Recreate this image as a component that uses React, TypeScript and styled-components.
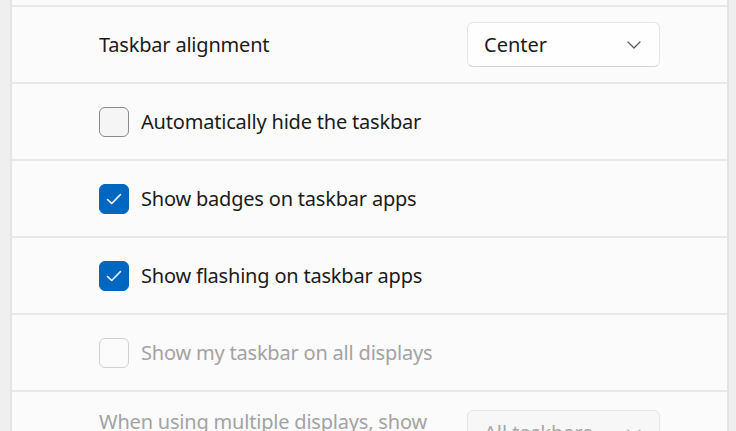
import React from 'react';
import styled, { createGlobalStyle } from 'styled-components';

const GlobalStyle = createGlobalStyle`
  html, body {
    margin: 0;
    padding: 0;
    background: #efefef;
    font-family: 'Noto Sans', 'Open Sans', sans-serif;
    -webkit-font-smoothing: antialiased;
  }
`;

const Page = styled.div`
  width: 736px;
  height: 431px;
  overflow: hidden;
  padding-left: 10px;
  box-sizing: border-box;
`;

const Card = styled.div`
  width: 719px;
  background: #fbfbfb;
  border-left: 2px solid #e4e4e4;
  border-right: 2px solid #e4e4e4;
  box-sizing: border-box;
  display: flex;
  flex-direction: column;
`;

const Stub = styled.div`
  height: 5px;
`;

const Row = styled.div<{ $top?: boolean }>`
  height: 75px;
  flex-shrink: 0;
  border-top: 2px solid #e8e8e8;
  padding: 0 67px 0 87px;
  display: flex;
  align-items: ${p => (p.$top ? 'flex-start' : 'center')};
  justify-content: space-between;
`;

const Label = styled.span<{ $disabled?: boolean }>`
  font-size: 20px;
  color: ${p => (p.$disabled ? '#a3a3a3' : '#1b1b1b')};
  letter-spacing: -0.2px;
`;

const TopLabel = styled(Label)`
  margin-top: 16px;
`;

const CheckRow = styled.label`
  display: flex;
  align-items: center;
  gap: 12px;
`;

const Box = styled.span<{ $checked?: boolean; $disabled?: boolean }>`
  width: 30px;
  height: 30px;
  box-sizing: border-box;
  border-radius: 6px;
  display: flex;
  align-items: center;
  justify-content: center;
  background: ${p => (p.$checked ? '#0067c0' : p.$disabled ? '#fbfbfb' : '#f5f5f5')};
  border: ${p =>
    p.$checked
      ? '1px solid #0067c0'
      : p.$disabled
      ? '1.5px solid #d0d0d0'
      : '1.5px solid #8b8b8b'};
`;

const Select = styled.div<{ $disabled?: boolean }>`
  width: 193px;
  height: 45px;
  box-sizing: border-box;
  background: ${p => (p.$disabled ? '#f7f7f7' : '#fefefe')};
  border: 1px solid #e5e5e5;
  border-bottom-color: ${p => (p.$disabled ? '#e5e5e5' : '#d4d4d4')};
  border-radius: 6px;
  padding: 0 18px 0 16px;
  display: flex;
  align-items: center;
  justify-content: space-between;
  font-size: 20px;
  color: ${p => (p.$disabled ? '#a8a8a8' : '#1b1b1b')};
  flex-shrink: 0;
`;

const LowSelect = styled(Select)`
  margin-top: 18px;
`;

const Chevron = ({ color }: { color: string }) => (
  <svg width="14" height="8" viewBox="0 0 14 8" fill="none">
    <path d="M1 1l6 6 6-6" stroke={color} strokeWidth="1.3" strokeLinecap="round" strokeLinejoin="round" />
  </svg>
);

const Check = () => (
  <svg width="16" height="12" viewBox="0 0 16 12" fill="none">
    <path d="M1.5 6.5l4.2 4 8.8-9" stroke="#fff" strokeWidth="1.6" strokeLinecap="round" strokeLinejoin="round" />
  </svg>
);

type Item = { label: string; checked?: boolean; disabled?: boolean };

const items: Item[] = [
  { label: 'Automatically hide the taskbar' },
  { label: 'Show badges on taskbar apps', checked: true },
  { label: 'Show flashing on taskbar apps', checked: true },
  { label: 'Show my taskbar on all displays', disabled: true },
];

export default function App() {
  return (
    <>
      <GlobalStyle />
      <Page>
        <Card>
          <Stub />
          <Row>
            <Label>Taskbar alignment</Label>
            <Select>
              Center
              <Chevron color="#5c5c5c" />
            </Select>
          </Row>
          {items.map(item => (
            <Row key={item.label}>
              <CheckRow>
                <Box $checked={item.checked} $disabled={item.disabled}>
                  {item.checked ? <Check /> : null}
                </Box>
                <Label $disabled={item.disabled}>{item.label}</Label>
              </CheckRow>
            </Row>
          ))}
          <Row $top>
            <TopLabel $disabled>When using multiple displays, show</TopLabel>
            <LowSelect $disabled>
              All taskbars
              <Chevron color="#b0b0b0" />
            </LowSelect>
          </Row>
        </Card>
      </Page>
    </>
  );
}
